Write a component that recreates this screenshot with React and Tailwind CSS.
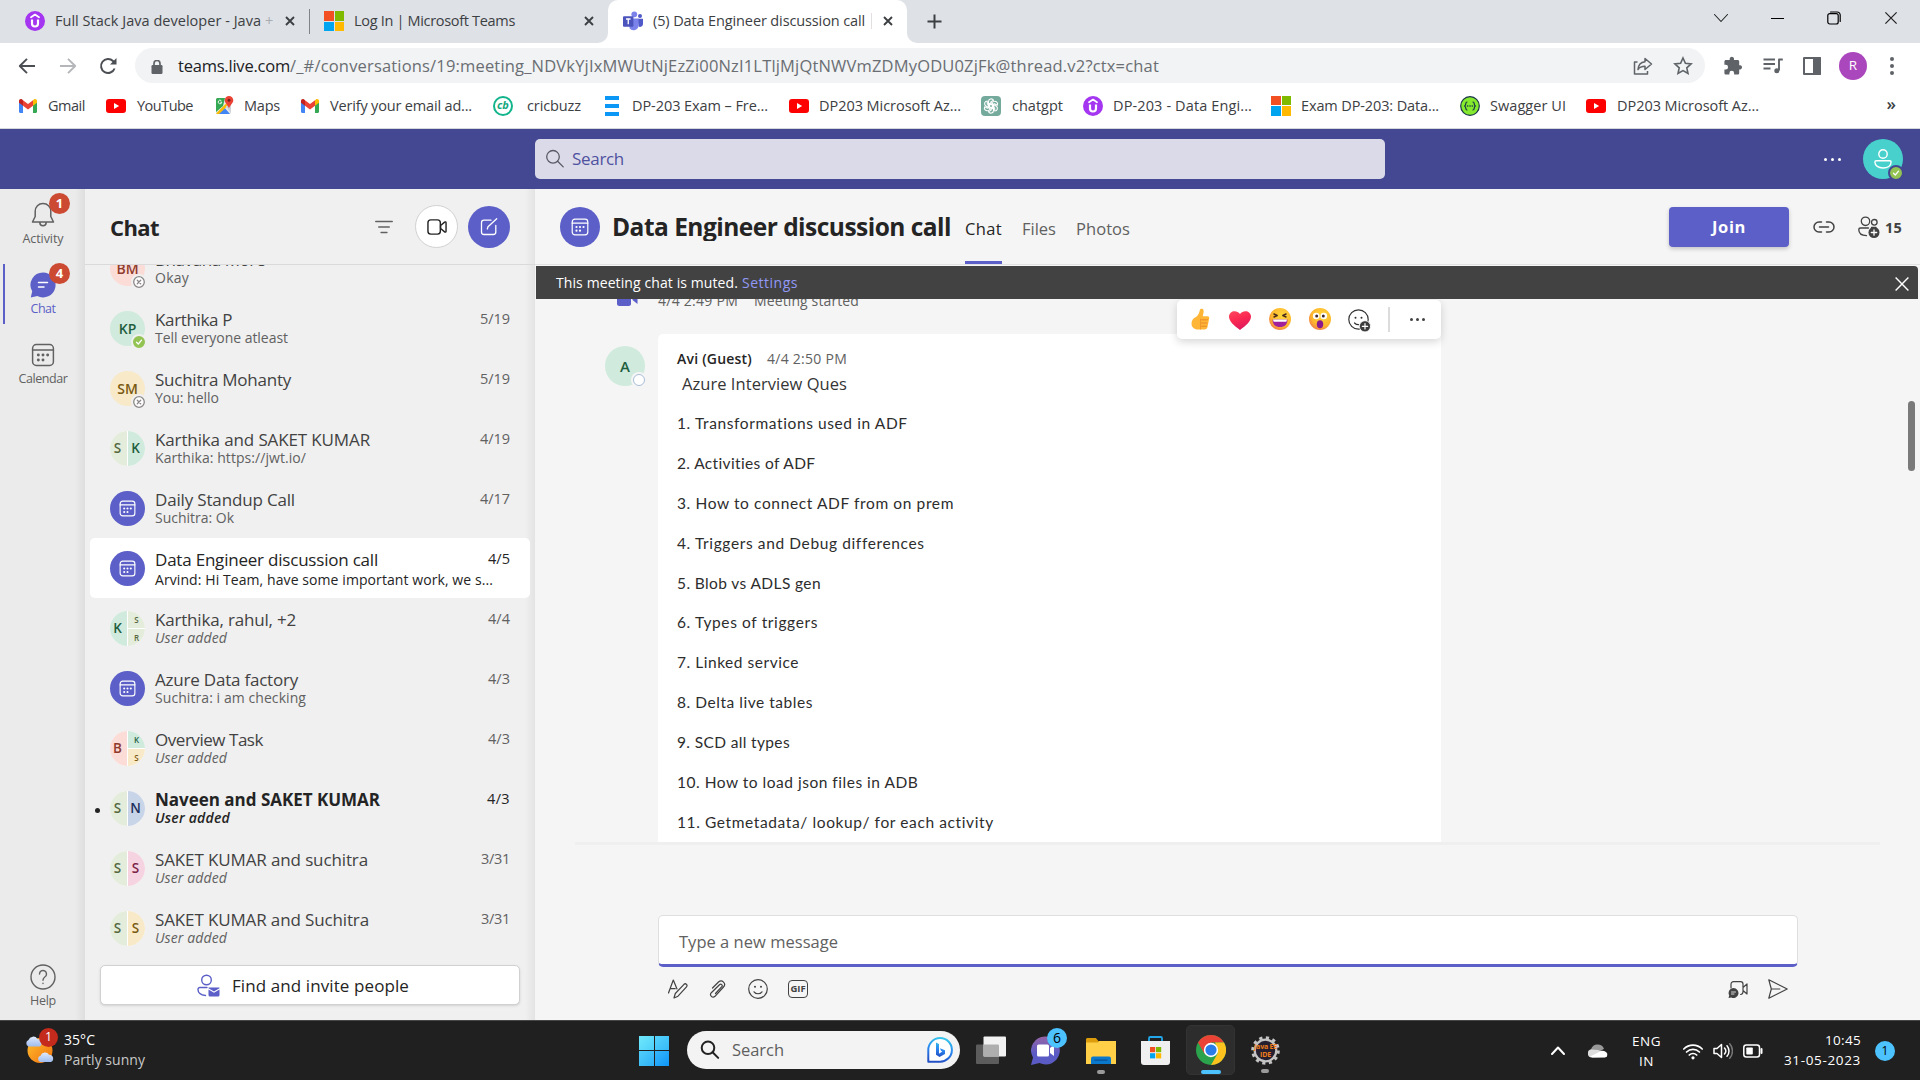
import React, { useLayoutEffect, useRef } from "react";

/* Text set to a fixed measure: tracking is computed so the line fills its box. */
function T({ className = "", children }) {
  const box = useRef(null);
  const ink = useRef(null);
  useLayoutEffect(() => {
    const fit = () => {
      if (!box.current || !ink.current) return;
      ink.current.style.letterSpacing = "0px";
      const want = box.current.getBoundingClientRect().width;
      const have = ink.current.getBoundingClientRect().width;
      const n = ink.current.textContent.length;
      ink.current.style.letterSpacing = `${(want - have) / n}px`;
    };
    fit();
    document.fonts.ready.then(fit);
  }, []);
  return (
    <span ref={box} className={"block shrink-0 whitespace-pre " + className}>
      <span ref={ink} className="inline-block">{children}</span>
    </span>
  );
}

const S = ({ size = 20, vb = 20, className = "", children, sw = 1.2 }) => (
  <svg width={size} height={size} viewBox={`0 0 ${vb} ${vb}`} fill="none" stroke="currentColor" strokeWidth={sw} strokeLinecap="round" strokeLinejoin="round" className={"shrink-0 " + className}>
    {children}
  </svg>
);

/* ---------- logos ---------- */
const Udemy = () => (
  <S>
    <circle cx="10" cy="10" r="10" fill="#a435f0" stroke="none" />
    <path d="M6 6.3 10 3.6l4 2.7" stroke="#fff" strokeWidth="1.8" />
    <path d="M7 8.6v3.9a3 3 0 0 0 6 0V8.6" stroke="#fff" strokeWidth="2.2" strokeLinecap="butt" />
  </S>
);
const Microsoft = () => (
  <span className="grid h-5 w-5 shrink-0 grid-cols-2 gap-px">
    <span className="bg-[#f25022]" /><span className="bg-[#7fba00]" />
    <span className="bg-[#00a4ef]" /><span className="bg-[#ffb900]" />
  </span>
);
const Teams = () => (
  <S sw={0}>
    <circle cx="17" cy="5" r="2" fill="#5059c9" />
    <circle cx="11.3" cy="3.3" r="2.9" fill="#7b83eb" />
    <path d="M14.5 7.8H20v5.2a3 3 0 0 1-4.4 2.6z" fill="#5059c9" />
    <path d="M6.5 7.5h9v6.8a5 5 0 0 1-9 3z" fill="#7b83eb" />
    <rect y="5.3" width="10.4" height="10.4" rx="1" fill="#4b53bc" />
    <path d="M3 8h4.5M5.25 8v5.2" stroke="#fff" strokeWidth="1.3" strokeLinecap="butt" />
  </S>
);
const Gmail = () => (
  <svg width="18" height="14" viewBox="0 0 18 14" className="shrink-0">
    <path d="M0 2v10.8c0 .7.5 1.2 1.2 1.2H4V5z" fill="#4285f4" />
    <path d="M18 2v10.8c0 .7-.5 1.2-1.2 1.2H14V5z" fill="#34a853" />
    <path d="M4 1.2 9 5l5-3.8v5.5L9 10.5 4 6.7z" fill="#ea4335" />
    <path d="M0 2C0 .3 1.9-.5 3.2.6L4 1.2v5.5L0 3.7z" fill="#c5221f" />
    <path d="M18 2c0-1.700-1.900-2.500-3.200-1.400L14 1.200v5.500l4-3z" fill="#fbbc04" />
  </svg>
);
const YouTube = () => (
  <svg width="20" height="14" viewBox="0 0 20 14" className="shrink-0">
    <rect width="20" height="14" rx="3" fill="#f00" />
    <path d="m8 4 5.200 3L8 10z" fill="#fff" />
  </svg>
);
const Maps = () => (
  <svg width="19" height="19" viewBox="0 0 19 19" className="shrink-0">
    <rect x="1" y="2" width="15" height="16" rx="1.500" fill="#e8eaed" />
    <path d="M1 3.500A1.500 1.500 0 0 1 2.500 2H10L8 10l-7 6z" fill="#34a853" />
    <path d="m3 18 6-7 6 7z" fill="#4285f4" />
    <path d="m1 17.500 10-10 2 2L4 18H2z" fill="#fbbc04" />
    <path d="m10.500 10 5.500 7V9z" fill="#cfd2d6" />
    <path d="M14 0a4.300 4.300 0 0 1 4.300 4.300c0 3-3 4.200-4.300 8.200-1.300-4-4.300-5.200-4.300-8.200A4.300 4.300 0 0 1 14 0z" fill="#ea4335" />
    <circle cx="14" cy="4.300" r="1.500" fill="#7b1f17" />
    <path d="M6.300 4.700a1.800 1.800 0 1 0 .5 1.500H5.300" stroke="#fff" strokeWidth=".9" fill="none" />
  </svg>
);
const Cricbuzz = () => (
  <span className="grid h-5 w-5 shrink-0 place-items-center rounded-full border-2 border-[#12b48b] bg-white text-[11px] leading-none font-bold text-[#12a67f] italic">
    <span className="-mt-0.5">cb</span>
  </span>
);
const Exam = () => (
  <span className="flex h-5 w-3.5 shrink-0 flex-col justify-between">
    <span className="h-1 bg-[#0b97f5]" /><span className="h-1 bg-[#0b97f5]" /><span className="h-1 bg-[#0b97f5]" />
  </span>
);
const ChatGPT = () => (
  <S sw={1.1} className="text-white">
    <rect width="20" height="20" rx="4" fill="#74aa9c" stroke="none" />
    {[0, 60, 120, 180, 240, 300].map((a) => (
      <path key={a} transform={`rotate(${a} 10 10)`} d="M7.500 9.600V5.600a2.700 2.700 0 0 1 5-1.400L9.800 5.900v2.300l3.300 1.900" />
    ))}
  </S>
);
const Swagger = () => (
  <S sw={1.2} className="text-[#173647]">
    <circle cx="10" cy="10" r="9.300" fill="#85ea2d" />
    <path d="M7 6C5 6 6.500 9.500 4.500 10 6.500 10.500 5 14 7 14M13 6c2 0 .5 3.500 2.500 4-2 .5-.5 4-2.500 4" />
    <path d="M7.600 10h.1M10 10h.1M12.300 10h.1" strokeWidth="1.600" />
  </S>
);

/* ---------- shared icons ---------- */
const Cal = ({ size = 18, sw = 1.3 }) => (
  <S size={size} vb={18} sw={sw}>
    <rect x="1.200" y="1.200" width="15.600" height="15.600" rx="2.800" />
    <path d="M1.200 5.200h15.600" />
    {[[5.500, 9], [9, 9], [12.500, 9], [5.500, 12.700], [9, 12.700]].map(([x, y]) => (
      <circle key={x + "-" + y} cx={x} cy={y} r="1.100" fill="currentColor" stroke="none" />
    ))}
  </S>
);
const X = ({ size = 10, sw = 1.9 }) => <S size={size} vb={10} sw={sw}><path d="m1 1 8 8M9 1 1 9" strokeLinecap="butt" /></S>;
const Search = ({ size = 20, sw = 1.3 }) => <S size={size} sw={sw}><circle cx="8" cy="7.800" r="6.300" /><path d="m12.600 12.300 5.600 5.600" /></S>;
const Dots = ({ className = "" }) => (
  <span className={"flex shrink-0 gap-1 " + className}>
    <i className="size-[3px] rounded-full bg-current" /><i className="size-[3px] rounded-full bg-current" /><i className="size-[3px] rounded-full bg-current" />
  </span>
);

/* ---------- browser ---------- */
function TabStrip() {
  return (
    <div className="flex h-[43px] bg-white text-[14.500px] leading-5 text-[#3c4043]">
      <div className="flex w-[608px] items-center rounded-br-[10px] bg-[#dee1e6] pb-px pl-[25px]">
        <Udemy />
        <div className="relative ml-2.5 flex w-[218px] overflow-hidden">
          <T className="w-[206px]">Full Stack Java developer - Java</T>
          <span className="ml-1 text-[#a9acb0]">+</span>
        </div>
        <div className="ml-3"><X /></div>
        <div className="ml-3.5 h-[25px] w-px bg-[#808387]" />
        <div className="ml-3.5"><Microsoft /></div>
        <T className="ml-2.5 w-[161px]">Log In | Microsoft Teams</T>
        <div className="ml-[69px]"><X /></div>
      </div>
      <div className="w-[299px] bg-[#dee1e6]">
        <div className="flex h-full items-center rounded-t-[10px] bg-white pb-px pl-[15px]">
          <Teams />
          <T className="ml-2.5 w-[212px]">(5) Data Engineer discussion call</T>
          <span className="ml-1.5 h-4 w-px bg-[#e3dfe0]" />
          <div className="ml-[11px]"><X /></div>
        </div>
      </div>
      <div className="flex flex-1 items-center rounded-bl-[10px] bg-[#dee1e6] pl-5">
        <S size={15} vb={15} sw={2}><path d="M7.500.5v14M.5 7.500h14" strokeLinecap="butt" /></S>
        <div className="mb-[7px] ml-auto flex items-center text-[#222]">
          <div className="flex w-[57px] justify-center"><S size={14} vb={14} sw={1.100}><path d="m.5 3.500 6.500 7 6.500-7" /></S></div>
          <div className="flex w-[57px] justify-center"><span className="h-px w-[13px] bg-black" /></div>
          <div className="flex w-[56px] justify-center"><S size={14} vb={14} sw={1.200} className="text-black"><rect x=".8" y="2.600" width="10.400" height="10.400" rx="2" /><path d="M3.500 1h6.700a3 3 0 0 1 3 3v6.500" /></S></div>
          <div className="flex w-[58px] justify-center"><X size={14} sw={0.9} /></div>
        </div>
      </div>
    </div>
  );
}

function AddressBar() {
  return (
    <div className="flex h-[45px] items-center text-[#5f6368]">
      <div className="flex w-[135px] items-center pl-[18px]">
        <S size={18} vb={18} sw={1.9} className="text-[#4b4e52]"><path d="M17 9H2M9 1.800 1.800 9 9 16.200" strokeLinecap="butt" /></S>
        <S size={18} vb={18} sw={1.9} className="ml-[23px] text-[#b4b6b9]"><path d="M1 9h15M9 1.800 16.200 9 9 16.200" strokeLinecap="butt" /></S>
        <S size={18} vb={18} sw={2} className="ml-[22px] text-[#4b4e52]"><path d="M15.600 11.500A7 7 0 1 1 14 4l2.200 2.300" strokeLinecap="butt" /><path d="M17.500 1v6.500H11z" fill="currentColor" stroke="none" /></S>
      </div>
      <div className="flex h-[35px] w-[1570px] items-center rounded-full bg-[#f1f3f4] pl-[15px]">
        <S size={14} vb={14} sw={1.700} className="mt-0.5"><rect x="1.500" y="5" width="11" height="9" rx="1.200" fill="currentColor" stroke="none" /><path d="M4 5V3.500a3 3 0 0 1 6 0V5" /></S>
        <T className="ml-[14px] w-[112px] text-[16.500px] leading-6 text-[#202124]">teams.live.com</T>
        <T className="w-[869px] text-[16.500px] leading-6 text-[#6a6e73]">/_#/conversations/19:meeting_NDVkYjIxMWUtNjEzZi00NzI1LTljMjQtNWVmZDMyODU0ZjFk@thread.v2?ctx=chat</T>
        <S size={20} className="ml-auto" sw={1.5}><path d="M4.500 6H1.500v12h13v-3" strokeLinecap="butt" /><path d="M12 2.500 18.500 8 12 13.500v-3.200c-3.500 0-5.500.8-7 3.200.3-4.300 2.500-7.300 7-7.800z" /></S>
        <S size={20} className="mr-[12px] ml-[20px]" sw={1.600}><path d="m10 2 2.400 5.300 5.700.6-4.300 3.900 1.200 5.700-5-2.900-5 2.900 1.200-5.700L1.900 7.900l5.700-.6z" strokeLinejoin="miter" /></S>
      </div>
      <S size={20} className="ml-[18px]" sw={0}><path d="M17.500 9.200h-1.300V5.500c0-.9-.7-1.600-1.600-1.600H11V2.600a2.200 2.200 0 0 0-4.300 0v1.300H3c-.9 0-1.600.7-1.600 1.600v3.300h1.300a2.300 2.300 0 0 1 0 4.700H1.400v3.400c0 .9.700 1.600 1.600 1.600h3.400v-1.300a2.300 2.300 0 0 1 4.700 0v1.300h3.500c.9 0 1.600-.7 1.600-1.600v-3.500h1.300a2.200 2.200 0 0 0 0-4.200z" fill="currentColor" /></S>
      <S size={20} className="ml-5" sw={1.900}><path d="M.5 3.500h11.500M.5 8h11.500M.5 12.500h7M16 14.500V3.500h3.800" strokeLinecap="butt" /><circle cx="13.800" cy="14.800" r="2.500" fill="currentColor" stroke="none" /></S>
      <S size={18} vb={18} className="ml-5" sw={2}><rect x="1" y="1" width="16" height="16" /><path d="M11 1h6v16h-6z" fill="currentColor" /></S>
      <span className="ml-[18px] grid size-7 place-items-center rounded-full bg-[#ab47bc] text-[13.500px] text-white">R</span>
      <span className="ml-[23px] flex flex-col gap-[3px]"><i className="size-1 rounded-full bg-current" /><i className="size-1 rounded-full bg-current" /><i className="size-1 rounded-full bg-current" /></span>
    </div>
  );
}

const bookmarks = [
  [<Gmail />, "w-[37px]", "Gmail", "ml-[19px]", "ml-[11px]"],
  [<YouTube />, "w-[56px]", "YouTube", "ml-[21px]", "ml-[11px]"],
  [<Maps />, "w-[36px]", "Maps", "ml-[22px]", "ml-[10px]"],
  [<Gmail />, "w-[142px]", "Verify your email ad...", "ml-[21px]", "ml-[11px]"],
  [<Cricbuzz />, "w-[54px]", "cricbuzz", "ml-[21px]", "ml-[14px]"],
  [<Exam />, "w-[136px]", "DP-203 Exam – Fre...", "ml-[24px]", "ml-[13px]"],
  [<YouTube />, "w-[142px]", "DP203 Microsoft Az...", "ml-[21px]", "ml-[10px]"],
  [<ChatGPT />, "w-[51px]", "chatgpt", "ml-[20px]", "ml-[11px]"],
  [<Udemy />, "w-[139px]", "DP-203 - Data Engi...", "ml-[20px]", "ml-[10px]"],
  [<Microsoft />, "w-[138px]", "Exam DP-203: Data...", "ml-[19px]", "ml-[10px]"],
  [<Swagger />, "w-[76px]", "Swagger UI", "ml-[21px]", "ml-[10px]"],
  [<YouTube />, "w-[142px]", "DP203 Microsoft Az...", "ml-[20px]", "ml-[11px]"],
];

function Bookmarks() {
  return (
    <div className="flex h-[41px] items-center border-b border-[#d5d7da] pb-[5px] text-[14.500px] leading-5 text-[#3c4043]">
      {bookmarks.map(([icon, w, label, gapBefore, gapIcon], i) => (
        <div key={i} className={"flex items-center " + gapBefore}>
          {icon}
          <div className={gapIcon}><T className={w}>{label}</T></div>
        </div>
      ))}
      <span className="mr-6 ml-auto pb-1 text-[17px] font-semibold">»</span>
    </div>
  );
}

/* ---------- Teams ---------- */
function TeamsHeader() {
  return (
    <div className="flex h-[60px] items-center bg-[#444791]">
      <div className="ml-[535px] flex h-10 w-[850px] items-center rounded-[5px] bg-[#dbdae8] pl-[10px]">
        <span className="text-[#5a5a66]"><Search /></span>
        <T className="ml-[7px] w-[52px] text-[17px] leading-6 text-[#4f52a0]">Search</T>
      </div>
      <Dots className="ml-auto text-white" />
      <span className="relative mr-[17px] ml-[22px] grid size-10 place-items-center rounded-full bg-[#48d1cc] text-white">
        <S size={20} sw={1.4}><circle cx="10" cy="5" r="4.200" /><path d="M3.200 11.700h13.600c.8 0 1.300.5 1.300 1.300 0 3.800-3.600 6-8.100 6s-8.100-2.200-8.100-6c0-.8.500-1.300 1.300-1.300z" /></S>
        <Presence kind="on" pos="-right-px -bottom-0.5" ring="border-[#444791]" />
      </span>
    </div>
  );
}

function Presence({ kind, ring = "border-[#f0f0f0]", pos = "-right-0.5 -bottom-1" }) {
  const base = "absolute grid size-4 place-items-center rounded-full border-2 " + pos + " ";
  if (kind === "on")
    return <span className={base + ring + " bg-[#92c353] text-white"}><S size={8} vb={8} sw={1.300}><path d="m1.500 4.200 1.800 1.800 3.200-3.800" /></S></span>;
  return (
    <span className={base + ring + " bg-white text-[#8a8886]"}>
      <S size={12} vb={12} sw={1.300}><circle cx="6" cy="6" r="5.300" /><path d="m4.300 4.300 3.400 3.400M7.700 4.300 4.300 7.700" /></S>
    </span>
  );
}

function RailItem({ label, w, badge, active, children }) {
  return (
    <div className={"relative flex h-[70px] flex-col items-center " + (active ? "text-[#5b5fc7]" : "text-[#616161]")}>
      {active && <span className="absolute top-[5px] left-[3px] h-[60px] w-0.5 bg-[#5b5fc7]" />}
      <div className="grid h-[50px] place-items-center pt-px">{children}</div>
      <T className={"-mt-[9px] text-[12.500px] leading-[17px] " + w}>{label}</T>
      {badge && <span className="absolute top-1 left-[49px] grid size-[21px] place-items-center rounded-full bg-[#cc4a31] text-[13px] leading-none font-bold text-white">{badge}</span>}
    </div>
  );
}

function Rail() {
  return (
    <div className="flex w-[85px] flex-col bg-[linear-gradient(to_right,#ebebeb_75px,#dedede)]">
      <div className="flex w-[86px] flex-1 flex-col">
        <RailItem label="Activity" w="w-[41px]" badge="1">
          <S size={26} vb={26} sw={1.500}><path d="M13 1.500c-4.500 0-7.800 3.400-7.800 7.800v5.200L2.500 20h21l-2.700-5.500V9.300c0-4.400-3.300-7.800-7.800-7.800zM9.800 20.500a3.200 3.200 0 0 0 6.400 0" /></S>
        </RailItem>
        <RailItem label="Chat" w="w-[25px]" badge="4" active>
          <S size={26} vb={26} sw={1.500}><path d="M13 .5a12.500 12.500 0 1 1-5.700 23.600L.8 25.500l1.400-6.200A12.500 12.500 0 0 1 13 .5z" fill="currentColor" stroke="none" /><path d="M8.500 10.500h9M8.500 15h5.500" stroke="#fff" /></S>
        </RailItem>
        <RailItem label="Calendar" w="w-[49px]"><Cal size={24} sw={1.100} /></RailItem>
        <div className="mt-auto h-[69px]">
          <RailItem label="Help" w="w-[26px]">
            <S size={26} vb={26} sw={1.400}><circle cx="13" cy="13" r="12" /><path d="M9.500 10a3.500 3.500 0 1 1 5.300 3c-1.200.8-1.800 1.500-1.800 3.200M13 19.300v.3" /></S>
          </RailItem>
        </div>
      </div>
    </div>
  );
}

const tone = {
  red: "bg-[#fbdcd7] text-[#8f3a2c]",
  green: "bg-[#d0ebdd] text-[#1f5e3f]",
  gold: "bg-[#f8e9c9] text-[#7a5a12]",
  olive: "bg-[#e4ecdb] text-[#55683f]",
  blue: "bg-[#c8d4e8] text-[#1d2f5c]",
  pink: "bg-[#f6d3e0] text-[#7b2247]",
};

function Avatar({ a }) {
  if (a === "cal")
    return <span className="grid size-[35px] shrink-0 place-items-center rounded-full bg-[#5b5fc7] text-white"><Cal size={17} sw={1.200} /></span>;
  if (a.length === 1)
    return (
      <span className={"relative grid size-[35px] shrink-0 place-items-center rounded-full text-[14px] font-semibold " + tone[a[0][1]]}>
        {a[0][0]}<Presence kind={a[0][2]} />
      </span>
    );
  return (
    <span className="flex size-[35px] shrink-0 gap-px overflow-hidden rounded-full bg-white text-[13.500px] font-semibold">
      <span className={"grid w-[17px] place-items-center pr-[2px] " + tone[a[0][1]]}>{a[0][0]}</span>
      <span className="flex flex-1 flex-col gap-px">
        {a.slice(1).map(([l, c], i) => (
          <span key={i} className={"grid flex-1 place-items-center leading-none " + tone[c] + (a.length > 2 ? " text-[8px]" : " pr-[2px]")}>{l}</span>
        ))}
      </span>
    </span>
  );
}

const ADDED = ["User added", "w-[72px] italic"];
const chats = [
  { a: [["BM", "red", "off"]], n: ["Bhavana More", "w-[110px]"], m: ["Okay", "w-[34px]"], d: ["5/22", "w-[30px]"] },
  { a: [["KP", "green", "on"]], n: ["Karthika P", "w-[77px]"], m: ["Tell everyone atleast", "w-[133px]"], d: ["5/19", "w-[30px]"] },
  { a: [["SM", "gold", "off"]], n: ["Suchitra Mohanty", "w-[136px]"], m: ["You: hello", "w-[64px]"], d: ["5/19", "w-[30px]"] },
  { a: [["S", "olive"], ["K", "green"]], n: ["Karthika and SAKET KUMAR", "w-[215px]"], m: ["Karthika: https://jwt.io/", "w-[151px]"], d: ["4/19", "w-[30px]"] },
  { a: "cal", n: ["Daily Standup Call", "w-[140px]"], m: ["Suchitra: Ok", "w-[79px]"], d: ["4/17", "w-[30px]"] },
  { a: "cal", n: ["Data Engineer discussion call", "w-[223px]"], m: ["Arvind: Hi Team, have some important work, we s...", "w-[338px]"], d: ["4/5", "w-[22px]"], sel: true },
  { a: [["K", "green"], ["S", "olive"], ["R", "olive"]], n: ["Karthika, rahul, +2", "w-[141px]"], m: ADDED, d: ["4/4", "w-[22px]"] },
  { a: "cal", n: ["Azure Data factory", "w-[143px]"], m: ["Suchitra: i am checking", "w-[151px]"], d: ["4/3", "w-[22px]"] },
  { a: [["B", "red"], ["K", "green"], ["S", "gold"]], n: ["Overview Task", "w-[108px]"], m: ADDED, d: ["4/3", "w-[22px]"] },
  { a: [["S", "olive"], ["N", "blue"]], n: ["Naveen and SAKET KUMAR", "w-[225px]"], m: ["User added", "w-[75px] italic"], d: ["4/3", "w-[23px]"], bold: true },
  { a: [["S", "olive"], ["S", "pink"]], n: ["SAKET KUMAR and suchitra", "w-[213px]"], m: ADDED, d: ["3/31", "w-[29px]"] },
  { a: [["S", "olive"], ["S", "gold"]], n: ["SAKET KUMAR and Suchitra", "w-[214px]"], m: ADDED, d: ["3/31", "w-[29px]"] },
];

function ChatRow({ c }) {
  const dark = c.sel || c.bold;
  return (
    <div className={"relative mr-[5px] ml-[5px] flex h-[60px] shrink-0 rounded-[5px] pr-5 pl-5 " + (c.sel ? "bg-white" : "")}>
      {c.bold && <span className="absolute top-[30px] left-[5px] size-[5px] rounded-full bg-[#242424]" />}
      <div className="pt-[13px]"><Avatar a={c.a} /></div>
      <div className="ml-[10px] w-0 flex-1 pt-[13px] leading-[18px]">
        <T className={"text-[17px] " + c.n[1] + (dark ? " text-[#242424]" : " text-[#424242]") + (c.bold ? " font-bold" : "")}>{c.n[0]}</T>
        <T className={"text-[14px] " + c.m[1] + (dark ? " text-[#242424]" : " text-[#616161]") + (c.bold ? " font-semibold" : "") + (c.sel ? " pt-0.5" : "")}>{c.m[0]}</T>
      </div>
      <T className={"pt-[12px] text-[14.500px] leading-[18px] " + c.d[1] + (dark ? " text-[#242424]" : " text-[#616161]")}>{c.d[0]}</T>
    </div>
  );
}

function ChatList() {
  return (
    <div className="flex w-[450px] flex-col bg-[linear-gradient(to_right,#f0f0f0_440px,#e3e3e3)]">
      <div className="flex h-[76px] items-center border-b border-[#dadada] pl-[25px] text-[#242424]">
        <T className="w-[49px] text-[22px] leading-7 font-bold">Chat</T>
        <S size={18} vb={18} sw={1.300} className="ml-[216px] text-[#616161]"><path d="M.7 3.500h16.600M3.700 9h10.600M6 14.500h6" /></S>
        <span className="ml-[22px] grid size-[43px] place-items-center rounded-full border border-[#d1d1d1] bg-white">
          <S size={20} vb={21} sw={1.500}><rect x="1" y="3" width="13" height="15" rx="3" /><path d="m14.300 9 4.200-3.600c.7-.6 1.500-.2 1.500.6v9c0 .8-.8 1.200-1.500.6L14.300 12z" /></S>
        </span>
        <span className="ml-2.5 grid size-[42px] place-items-center rounded-full bg-[#5b5fc7] text-white">
          <S size={18} vb={18} sw={1.300}><path d="M11 2.200H4A2.500 2.500 0 0 0 1.500 4.700V14A2.500 2.500 0 0 0 4 16.500h9.300a2.500 2.500 0 0 0 2.500-2.500V7.500M7.300 11l.7-2.300L16.700.8" /></S>
        </span>
      </div>
      <div className="flex h-[693px] flex-col overflow-hidden">
        <div className="-mt-[27px] flex flex-col">{chats.map((c, i) => <ChatRow key={i} c={c} />)}</div>
      </div>
      <div className="mt-[7px] mr-[15px] ml-[15px] flex h-10 items-center rounded-[5px] border border-[#d1d1d1] bg-white pl-24 shadow-sm">
        <S size={23} vb={23} sw={1.400} className="text-[#5b5fc7]"><circle cx="9.500" cy="6" r="4.800" /><path d="M10 13.500H3C1.800 13.500 1 14.300 1 15.500c0 3.300 3 5.500 7.500 6" /><path d="M11.500 14.300V13.500h11v.8L17 17.500zM11.500 15.600l5.500 3.200 5.500-3.200v5.400a1.500 1.500 0 0 1-1.500 1.500h-8a1.500 1.500 0 0 1-1.500-1.500z" fill="currentColor" stroke="none" /></S>
        <T className="ml-3 w-[177px] pt-px text-[17px] leading-6 font-medium text-[#242424]">Find and invite people</T>
      </div>
    </div>
  );
}

const questions = [
  ["1. Transformations used in ADF", "w-[231px]"],
  ["2. Activities of ADF", "w-[139px]"],
  ["3. How to connect ADF from on prem", "w-[277px]"],
  ["4. Triggers and Debug differences", "w-[247px]"],
  ["5. Blob vs ADLS gen", "w-[144px]"],
  ["6. Types of triggers", "w-[141px]"],
  ["7. Linked service", "w-[122px]"],
  ["8. Delta live tables", "w-[136px]"],
  ["9. SCD all types", "w-[113px]"],
  ["10. How to load json files in ADB", "w-[241px]"],
  ["11. Getmetadata/ lookup/ for each activity", "w-[317px]"],
];

const Face = ({ children }) => (
  <S size={22} vb={22} sw={1.300} className="text-[#4a2b1b]">
    <defs><radialGradient id="face" cx=".6" cy=".35" r=".75"><stop offset="0" stopColor="#ffd93b" /><stop offset=".65" stopColor="#fdb52e" /><stop offset="1" stopColor="#ee6f52" /></radialGradient></defs>
    <circle cx="11" cy="11" r="11" fill="url(#face)" stroke="none" />
    {children}
  </S>
);

function ReactionBar() {
  return (
    <div className="absolute top-px right-0 flex h-[39px] w-[264px] items-center rounded-[5px] bg-white pb-px pl-[13px] shadow-[0_3px_8px_rgba(0,0,0,0.16)]">
      <S size={22} vb={22} sw={1}>
        <path d="M11 .8c2.500-.8 3 1.700 2.500 4l-.7 3.500h4.700c1.300 0 2 .9 1.700 2l-1.700 8.700c-.3 1.600-1.300 2.500-3 2.500H8C4 21.500 1.500 19 1.500 15.500c0-3.300 1.800-5.200 4.500-6.500C8.500 7.500 9.500 4 9.800 2.300 9.900 1.500 10.300 1 11 .8z" fill="#ffb636" stroke="none" />
        <path d="M11.500 11.800h6M11 15h6M11.500 18.200h5" stroke="#e8892b" /><path d="M10.500 11v10" stroke="#f09a2c" />
      </S>
      <S size={22} vb={22} className="ml-[17px]" sw={0}>
        <defs><linearGradient id="heart" x1="0" y1="0" x2=".4" y2="1"><stop offset="0" stopColor="#ff4a5e" /><stop offset=".5" stopColor="#fb2a52" /><stop offset="1" stopColor="#e01a5c" /></linearGradient></defs>
        <path d="M11 22C5 17.500 0 13.500 0 8.500 0 3 7.500 1 11 6c3.500-5 11-3 11 2.500 0 5-5 9-11 13.500z" fill="url(#heart)" />
      </S>
      <div className="ml-[18px]"><Face><path d="m5 6 3.200 1.500L5 9M17 6l-3.200 1.500L17 9" strokeWidth="1.500" /><path d="M3.500 11.500h15c0 5-3 7.500-7.500 7.500s-7.500-2.500-7.500-7.500z" fill="#a1209b" stroke="none" /><path d="M4 11.500h14l-.7 2.300H4.700z" fill="#fff" stroke="none" /></Face></div>
      <div className="ml-[18px]"><Face><circle cx="7.200" cy="8" r="3.300" fill="#fff" stroke="none" /><circle cx="14.800" cy="8" r="3.300" fill="#fff" stroke="none" /><circle cx="7.700" cy="8" r="1.500" fill="#402a32" stroke="none" /><circle cx="14.300" cy="8" r="1.500" fill="#402a32" stroke="none" /><ellipse cx="11" cy="16.300" rx="3.200" ry="4" fill="#8b1a8c" stroke="none" /></Face></div>
      <S size={23} vb={23} className="mt-0.5 ml-[17px] text-[#333]" sw={1.200}><circle cx="10.500" cy="10.500" r="9.700" /><path d="M6.500 14c1 1 2.400 1.700 4 1.700" /><circle cx="7.500" cy="8.700" r="1" fill="currentColor" stroke="none" /><circle cx="13.500" cy="8.700" r="1" fill="currentColor" stroke="none" /><circle cx="17" cy="17.300" r="5.600" fill="#3b3b3b" stroke="#fff" strokeWidth=".8" /><path d="M17 14.600v5.400M14.300 17.300h5.400" stroke="#fff" /></S>
      <span className="ml-[17px] h-[25px] w-0.5 bg-[#dcdcdc]" />
      <Dots className="ml-[20px] gap-[3px] text-[#424242]" />
    </div>
  );
}

function Main() {
  return (
    <div className="flex flex-1 flex-col bg-[#f5f5f5]">
      <div className="flex h-[76px] items-center border-b border-[#e2e2e2] pl-[25px]">
        <span className="grid size-10 place-items-center rounded-full bg-[#5b5fc7] text-white"><Cal size={18} sw={1.200} /></span>
        <T className="mt-0.5 ml-[12px] h-[26px] w-[339px] overflow-hidden text-[24.500px] leading-[24px] font-bold text-[#242424]">Data Engineer discussion call</T>
        <div className="relative ml-[14px] text-[#242424]">
          <T className="mt-1 w-[37px] text-[16.500px] leading-6 font-medium">Chat</T>
          <span className="absolute -bottom-[23px] left-0 h-[3px] w-full bg-[#5b5fc7]" />
        </div>
        <T className="mt-1 ml-5 w-[34px] text-[16.500px] leading-6 text-[#616161]">Files</T>
        <T className="mt-1 ml-5 w-[54px] text-[16.500px] leading-6 text-[#616161]">Photos</T>
        <div className="ml-auto flex h-10 w-[120px] items-center justify-center rounded-[4px] bg-[#5b5fc7] shadow-[0_2px_4px_rgba(0,0,0,0.2)]">
          <T className="w-[34px] pt-px text-[16.500px] leading-6 font-bold text-white">Join</T>
        </div>
        <S size={22} vb={22} sw={1.500} className="ml-[24px] text-[#424242]"><path d="M8.500 6H6a5 5 0 0 0 0 10h2.500M13.500 6H16a5 5 0 0 1 0 10h-2.500M6.500 11h9" /></S>
        <S size={22} vb={22} sw={1.300} className="ml-[23px] text-[#424242]"><circle cx="7.500" cy="5.300" r="4.200" /><circle cx="16.300" cy="6.300" r="2.800" /><path d="M10.500 12H2.700C1.500 12 .8 12.700.8 13.800c0 3.600 2.400 5.700 7.700 5.900M13.500 11.500H18" /><circle cx="16" cy="16.500" r="5.500" fill="currentColor" stroke="none" /><path d="M16 13.800v5.400M13.300 16.500h5.400" stroke="#fff" /></S>
        <T className="mr-[18px] ml-[5px] w-[17px] pt-0.5 text-[14.500px] leading-6 font-bold text-[#424242]">15</T>
      </div>
      <div className="mt-px mr-0.5 ml-px flex h-[33px] items-center rounded-tr-[4px] bg-[#424242] pl-5 text-[14px] leading-5 font-medium text-white">
        <T className="w-[182px]">This meeting chat is muted.</T>
        <T className="ml-1 w-[56px] text-[#9299f7]">Settings</T>
        <div className="mt-0.5 mr-2 ml-auto"><X size={16} sw={0.900} /></div>
      </div>
      <div className="flex h-[543px] overflow-hidden">
        <div className="relative w-[906px]">
          <div className="flex h-[35px] pl-[82px] text-[14px] leading-4 text-[#616161]">
            <S size={22} vb={22} sw={0} className="-mt-[13px] text-[#5b5fc7]"><rect y="3" width="14" height="17" rx="2.500" fill="currentColor" /><path d="m15.500 8 5-3v13l-5-4z" fill="currentColor" /></S>
            <T className="-mt-[6px] ml-[19px] w-[80px]">4/4 2:49 PM</T>
            <T className="-mt-[6px] ml-4 w-[105px]">Meeting started</T>
          </div>
          <div className="flex h-[508px] pl-[70px]">
            <span className="relative mt-3 grid size-10 place-items-center rounded-full bg-[#d0ebdd] text-[15px] font-semibold text-[#1f5e3f]">
              A
              <span className="absolute -right-0.5 -bottom-0.5 grid size-4 place-items-center rounded-full bg-[#f5f5f5]"><span className="size-3 rounded-full border border-[#a9bdd6] bg-white" /></span>
            </span>
            <div className="ml-[13px] h-[508px] w-[783px] rounded-tl-[5px] bg-white pt-[15px] pl-[19px]">
              <div className="flex text-[14px] leading-5">
                <T className="w-[75px] font-semibold text-[#242424]">Avi (Guest)</T>
                <T className="ml-[15px] w-[80px] text-[#616161]">4/4 2:50 PM</T>
              </div>
              <T className="mt-[3px] ml-[5px] w-[165px] text-[16.500px] leading-6 text-[#353535]">Azure Interview Ques</T>
              <div className="mt-[8px] font-['Lato',sans-serif] text-[15.500px] text-[#2d2d2d]">
                {questions.map(([q, w]) => <T key={q} className={"h-[39.900px] leading-[39.900px] " + w}>{q}</T>)}
              </div>
            </div>
          </div>
          <ReactionBar />
        </div>
        <div className="mt-[102px] mr-[5px] ml-auto h-[70px] w-[7px] rounded-full bg-[#7a7a7a]" />
      </div>
      <div className="mr-10 ml-10 h-[3px] bg-[#efefef]" />
      <div className="mt-[70px] ml-[123px] flex h-[52px] w-[1140px] items-center rounded-[5px] border border-b-[3px] border-[#dedede] border-b-[#5b5fc7] bg-white pl-[20px]">
        <T className="w-[159px] pt-1 text-[16.500px] leading-6 text-[#616161]">Type a new message</T>
      </div>
      <div className="mt-[12px] flex items-center pl-[133px] text-[#424242]">
        <S size={20}><path d="m.5 14 4.800-13L9 10M2.200 9.700h5" /><path d="m6 19 1.300-4.500L16 5.300c1.800-1.500 4 .8 2.500 2.500L10 17.200z" /></S>
        <S size={20} className="ml-5"><path d="m4 8.500 6-6c3.500-3 8.200 1.500 5 5l-8.500 9.300c-2.500 2.300-6-1-3.700-3.600L11 5.200c1.500-1.400 3.600.5 2.300 2L7 14" transform="translate(.5 .5)" /></S>
        <S size={20} className="ml-5"><circle cx="10" cy="10" r="9.300" /><path d="M6 12.800c2 2.600 6 2.600 8 0" /><circle cx="7" cy="7.800" r="1" fill="currentColor" stroke="none" /><circle cx="13" cy="7.800" r="1" fill="currentColor" stroke="none" /></S>
        <span className="ml-5 grid h-[18px] w-5 place-items-center rounded-[4px] border-[1.500px] border-[#424242] text-[9.500px] leading-none font-bold">GIF</span>
        <S size={20} className="ml-auto"><path d="M3 9V5.300C3 3.700 4 2.700 5.600 2.700h7c1.600 0 2.400 1 2.400 2.600v7.500c0 1.600-.8 2.500-2.400 2.700M15 8.500l4-3.500v10l-4-3.500" /><path d="M5.500 9a5 5 0 1 1-2.200 9.500L.5 19l.7-2.600A5 5 0 0 1 5.500 9z" fill="currentColor" stroke="none" /><path d="M3.500 13h4M3.500 15h2.500" stroke="#fff" strokeWidth=".8" /></S>
        <S size={20} className="mr-[132px] ml-5"><path d="m.8.8 18.400 9.200L.8 19.200 3.300 10zM3.300 10h8.500" /></S>
      </div>
    </div>
  );
}

/* ---------- Windows taskbar ---------- */
function Taskbar() {
  return (
    <div className="flex h-[60px] items-center border-t border-[#454747] bg-[#202020] text-white">
      <div className="relative ml-[25px]">
        <S size={30} vb={30} sw={0}>
          <defs><linearGradient id="sun" x1="0" y1="0" x2="1" y2="1"><stop offset="0" stopColor="#ffc02e" /><stop offset="1" stopColor="#f1700e" /></linearGradient><linearGradient id="cloud" x1="0" y1="0" x2="0" y2="1"><stop offset="0" stopColor="#dfe9fb" /><stop offset="1" stopColor="#9fbdf0" /></linearGradient></defs>
          <circle cx="15" cy="14.500" r="12.500" fill="url(#sun)" />
          <path d="M3.500 10.500a3.500 3.500 0 0 1 0-6.500 5 5 0 0 1 9-1 4 4 0 0 1 2 7.500z" fill="url(#cloud)" />
          <path d="M15.500 26a3.200 3.200 0 0 1 0-6.200 4.700 4.700 0 0 1 8.500-1A3.800 3.800 0 0 1 26 26z" fill="url(#cloud)" />
        </S>
        <span className="absolute -top-2 left-[14px] grid size-[19px] place-items-center rounded-full bg-[#c42b1c] text-[12.500px] leading-none">1</span>
      </div>
      <div className="ml-[9px] pb-0.5 text-[14px] leading-5">
        <T className="w-[31px]">35°C</T>
        <T className="w-[81px] text-[#c8c8c8]">Partly sunny</T>
      </div>
      <div className="ml-[494px] grid size-[30px] grid-cols-2 gap-px">
        <span className="bg-[linear-gradient(135deg,#6fe8fc,#4fd0fb)]" /><span className="bg-[linear-gradient(135deg,#55d3fb,#36b9f8)]" />
        <span className="bg-[linear-gradient(135deg,#50cffb,#2fb0f7)]" /><span className="bg-[linear-gradient(135deg,#37b8f9,#0f96f8)]" />
      </div>
      <div className="mb-px ml-[18px] flex h-[38px] w-[273px] items-center rounded-full bg-[#f3f3f3] pl-[13px]">
        <span className="text-[#222]"><Search size={20} sw={2} /></span>
        <T className="ml-[12px] w-[52px] text-[16.500px] leading-6 text-[#5f5f5f]">Search</T>
        <S size={26} vb={26} className="mr-[7px] ml-auto" sw={2}>
          <defs><linearGradient id="bing" x1=".6" y1="0" x2=".4" y2="1"><stop offset="0" stopColor="#35c5ea" /><stop offset=".5" stopColor="#2a86ef" /><stop offset="1" stopColor="#2350c5" /></linearGradient></defs>
          <path d="M1.300 24.700V13A11.800 11.800 0 1 1 13 24.700z" stroke="url(#bing)" fill="#fff" />
          <path d="M9 5.500v12.300l3.500 2.300 5.500-3.200v-3.700l-5-2 1 2.600 1.300.7-3.300 2.200V7z" fill="url(#bing)" stroke="none" />
        </S>
      </div>
      <S size={30} vb={30} sw={0} className="mb-px ml-4">
        <rect y="9.500" width="23" height="19.500" rx="1" fill="#5c5c5c" /><rect x="7.500" y="1.500" width="22.500" height="20" rx="1" fill="#f2f2f2" /><path d="M7.500 9.500H22a1 1 0 0 1 1 1v11H7.500z" fill="#aeaeae" />
      </S>
      <div className="relative ml-[25px]">
        <S size={29} vb={29} sw={0}>
          <defs><linearGradient id="tc" x1="0" y1="0" x2="0" y2="1"><stop offset="0" stopColor="#9564a5" /><stop offset=".6" stopColor="#5b5bc5" /></linearGradient></defs>
          <path d="M14.500.5A14 14 0 1 1 8.500 27L0 29l2-7.500A14 14 0 0 1 14.500.5z" fill="url(#tc)" />
          <rect x="6" y="8.500" width="12" height="12" rx="1.500" fill="#fff" /><path d="m19 12 4-3v11l-4-3z" fill="#fff" />
        </S>
        <span className="absolute -top-2 left-4 grid size-5 place-items-center rounded-full bg-[#4cc2ff] text-[14px] leading-none text-black">6</span>
      </div>
      <div className="relative ml-[26px]">
        <S size={30} vb={30} sw={0}>
          <path d="M0 3.500C0 2.700.7 2 1.500 2h8.300l3 3.500H13V10H0z" fill="#dc9c0c" /><path d="M0 6.500h12l1-1.500h17v23H0z" fill="#ffcf48" /><path d="M5 28v-5.500a2 2 0 0 1 2-2h16a2 2 0 0 1 2 2V28z" fill="#0a79cc" /><rect x="8.500" y="23.500" width="13" height="1.200" fill="#0b4f94" />
        </S>
        <span className="absolute -bottom-2 left-[11px] h-1 w-2 rounded-full bg-[#9a9a9a]" />
      </div>
      <S size={29} vb={29} sw={0} className="ml-[25px]">
        <path d="M8 7V2.200C8 1.500 8.500 1 9.200 1h10.600c.7 0 1.200.5 1.200 1.200V7" fill="none" stroke="#21a7ea" strokeWidth="1.800" /><path d="M0 5h29v21a3 3 0 0 1-3 3H3a3 3 0 0 1-3-3z" fill="#f0f0f0" /><path d="M9 11h5.200v5.200H9z" fill="#f25022" /><path d="M15 11h5.200v5.200H15z" fill="#7fba00" /><path d="M9 17.200h5.200v5.200H9z" fill="#00a4ef" /><path d="M15 17.200h5.200v5.200H15z" fill="#ffb900" />
      </S>
      <div className="relative mb-px ml-4 grid h-[50px] w-[49px] place-items-center rounded-[5px] border border-[#333] bg-[#2d2d2d]">
        <S size={30} vb={30} sw={0}>
          <circle cx="15" cy="15" r="15" fill="#2ba24c" /><path d="M15 0a15 15 0 0 1 13 7.500H15L8.500 18.700 2 7.500A15 15 0 0 1 15 0z" fill="#ea4335" /><path d="M28 7.500A15 15 0 0 1 15 30l6.500-11.200L22 15l-3-7.500z" fill="#fcc31e" /><circle cx="15" cy="15" r="7.200" fill="#fff" /><circle cx="15" cy="15" r="5.600" fill="#2a7de9" />
        </S>
        <span className="absolute bottom-0 left-[14px] h-1 w-5 rounded-full bg-[#4cc2ff]" />
      </div>
      <div className="relative ml-4 grid size-[29px] place-items-center">
        <S size={29} vb={29} sw={0} className="col-start-1 row-start-1">
          <circle cx="14.500" cy="14.500" r="12.800" fill="none" stroke="#c4c4c4" strokeWidth="3" strokeDasharray="3.200 3.500" strokeLinecap="butt" />
          <circle cx="14.500" cy="14.500" r="10.800" fill="#252030" stroke="#c4c4c4" strokeWidth="2.200" />
        </S>
        <span className="col-start-1 row-start-1 w-[27px] text-center text-[7px] leading-[8px] font-bold tracking-[-0.2px] whitespace-nowrap text-[#ef7d1a]">Java EE<br />IDE</span>
        <span className="absolute -bottom-2 left-[10px] h-1 w-2 rounded-full bg-[#9a9a9a]" />
      </div>
      <S size={14} vb={14} sw={2} className="ml-auto"><path d="m1 10 6-6.500 6 6.500" /></S>
      <S size={20} sw={0} className="ml-[23px]"><path d="M3.500 16a4 4 0 0 1-.5-7.800 7 7 0 0 1 13-.4z" fill="#999" /><path d="M4 16.500a4 4 0 0 1-.2-8L10 9l6.500 2.500L19 16z" fill="#ddd" /><path d="M2 15.500 13 10a5 5 0 0 1 5.500 1.500 3 3 0 0 1-1.500 5H4.500z" fill="#fff" /></S>
      <div className="ml-6 flex flex-col items-center text-[13.500px] leading-5">
        <T className="w-[29px]">ENG</T>
        <T className="w-[15px]">IN</T>
      </div>
      <S size={20} sw={1.700} className="ml-[22px]"><path d="M.8 8a13 13 0 0 1 18.400 0M3.600 11a9 9 0 0 1 12.800 0M6.300 14a5.300 5.300 0 0 1 7.400 0" /><circle cx="10" cy="16.800" r="1.600" fill="currentColor" stroke="none" /></S>
      <S size={20} sw={1.500} className="ml-[10px]"><path d="M1 7.500h3L8.500 3.500v13L4 12.500H1zM11.500 7a4.500 4.500 0 0 1 0 6M14 4.700a8 8 0 0 1 0 10.600" /><path d="M16.700 2.700a11 11 0 0 1 0 14.600" stroke="#777" /></S>
      <S size={20} sw={1.500} className="ml-[10px]"><rect x=".8" y="4" width="15.700" height="12" rx="2.500" /><rect x="3.300" y="6.500" width="6.500" height="7" rx=".8" fill="currentColor" stroke="none" /><path d="M18.500 8v4" strokeWidth="2" /></S>
      <div className="ml-[21px] flex flex-col items-end pb-0.5 text-[13.500px] leading-5">
        <T className="w-[36px]">10:45</T>
        <T className="w-[77px]">31-05-2023</T>
      </div>
      <span className="mr-[25px] ml-[14px] grid size-5 place-items-center rounded-full bg-[#4cc2ff] text-[12px] leading-none text-black">1</span>
    </div>
  );
}

export default function App() {
  return (
    <div className="flex h-[1080px] w-[1920px] flex-col overflow-hidden bg-white font-['Open_Sans','Noto_Sans',sans-serif]">
      <TabStrip />
      <AddressBar />
      <Bookmarks />
      <TeamsHeader />
      <div className="flex h-[831px]">
        <Rail />
        <ChatList />
        <Main />
      </div>
      <Taskbar />
    </div>
  );
}
